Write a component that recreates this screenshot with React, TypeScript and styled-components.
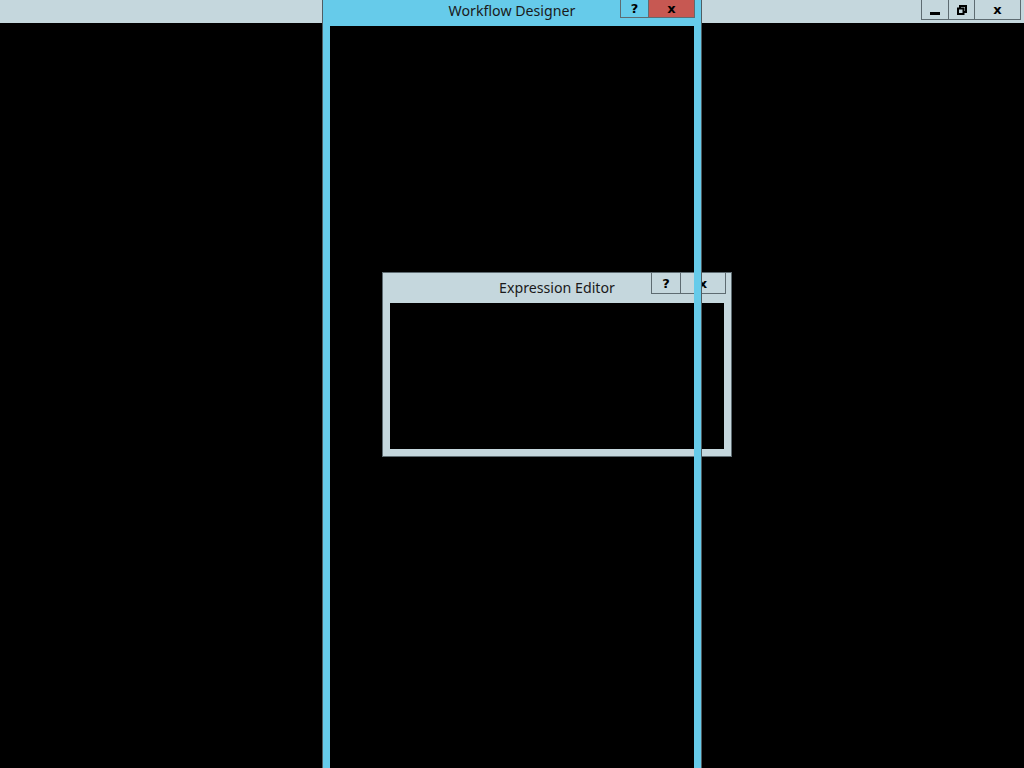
import React from "react";
import styled, { createGlobalStyle } from "styled-components";

const Global = createGlobalStyle`
  html, body { margin: 0; padding: 0; background: #000; }
  body { font-family: "Noto Sans", "Open Sans", sans-serif; overflow: hidden; }
`;

const Desktop = styled.div`
  position: relative;
  width: 1024px;
  height: 768px;
  background: #000;
  overflow: hidden;
`;

const TopBar = styled.div`
  height: 23px;
  background: #c5d7dd;
  display: flex;
  justify-content: flex-end;
  align-items: flex-start;
  padding-right: 3px;
  box-sizing: border-box;
`;

const CaptionButton = styled.div<{ $w: number; $h: number; $bg?: string }>`
  width: ${(p) => p.$w}px;
  height: ${(p) => p.$h}px;
  box-sizing: border-box;
  border: 1px solid #5e6b71;
  border-top: none;
  margin-left: -1px;
  background: ${(p) => p.$bg ?? "transparent"};
  display: flex;
  align-items: center;
  justify-content: center;
  color: #000;
  font-family: "DejaVu Sans", sans-serif;
  font-weight: bold;
  font-size: 13px;
  line-height: 1;
`;

const Window = styled.div<{ $left: number; $top: number; $w: number; $h: number; $frame: string; $z: number }>`
  position: absolute;
  left: ${(p) => p.$left}px;
  top: ${(p) => p.$top}px;
  width: ${(p) => p.$w}px;
  height: ${(p) => p.$h}px;
  box-sizing: border-box;
  border: 1px solid #5e6b71;
  background: ${(p) => p.$frame};
  padding: 0 7px 7px;
  display: flex;
  flex-direction: column;
  z-index: ${(p) => p.$z};
`;

const DesignerFrame = styled(Window)`
  background: transparent;
  border-color: #4f5d63;
  box-shadow: inset 0 0 0 7px #66cbea;
`;

const TitleBar = styled.div<{ $h: number; $bg?: string }>`
  height: ${(p) => p.$h}px;
  margin: 0 -7px;
  padding: 0 7px;
  background: ${(p) => p.$bg ?? "transparent"};
  display: grid;
  grid-template-columns: 1fr auto 1fr;
  align-items: start;
  flex-shrink: 0;
`;

const Caption = styled.div<{ $top: number }>`
  grid-column: 2;
  padding-top: ${(p) => p.$top}px;
  font-size: 14.2px;
  line-height: 18px;
  color: #1a1a1a;
  white-space: nowrap;
`;

const Buttons = styled.div<{ $mr: number }>`
  grid-column: 3;
  justify-self: end;
  display: flex;
  margin-right: ${(p) => p.$mr}px;
  margin-top: -1px;
`;

const ClientArea = styled.div<{ $bg: string }>`
  flex: 1;
  background: ${(p) => p.$bg};
`;

const DialogClient = styled.div`
  flex: 1;
  background: #000;
`;

const MinIcon = () => (
  <svg width="10" height="3" viewBox="0 0 10 3">
    <rect x="0" y="0" width="10" height="3" fill="#000" />
  </svg>
);

const RestoreIcon = () => (
  <svg width="10" height="10" viewBox="0 0 10 10">
    <rect x="3" y="1" width="6" height="6" fill="none" stroke="#000" strokeWidth="2" />
    <rect x="1" y="3.5" width="5.5" height="5.5" fill="#c5d7dd" stroke="#000" strokeWidth="2" />
  </svg>
);

export default function App() {
  return (
    <>
      <Global />
      <Desktop>
        <TopBar>
          <CaptionButton $w={28} $h={20} style={{ alignItems: "flex-end", paddingBottom: 4 }}>
            <MinIcon />
          </CaptionButton>
          <CaptionButton $w={27} $h={20}>
            <RestoreIcon />
          </CaptionButton>
          <CaptionButton $w={47} $h={20}>x</CaptionButton>
        </TopBar>

        <Window $left={382} $top={272} $w={350} $h={185} $frame="#c5d7dd" $z={1}>
          <TitleBar $h={30}>
            <Caption $top={6}>Expression Editor</Caption>
            <Buttons $mr={-2}>
              <CaptionButton $w={30} $h={22} style={{ borderTop: "1px solid #5e6b71" }}>?</CaptionButton>
              <CaptionButton $w={46} $h={22} style={{ borderTop: "1px solid #5e6b71" }}>x</CaptionButton>
            </Buttons>
          </TitleBar>
          <DialogClient />
        </Window>

        <DesignerFrame $left={322} $top={-1} $w={380} $h={780} $frame="#66cbea" $z={2}>
          <TitleBar $h={26} $bg="#66cbea">
            <Caption $top={2}>Workflow Designer</Caption>
            <Buttons $mr={-1}>
              <CaptionButton $w={29} $h={18} style={{ marginTop: 1 }}>?</CaptionButton>
              <CaptionButton $w={47} $h={18} $bg="#c75852" style={{ marginTop: 1 }}>x</CaptionButton>
            </Buttons>
          </TitleBar>
          <ClientArea $bg="transparent" />
        </DesignerFrame>
      </Desktop>
    </>
  );
}
